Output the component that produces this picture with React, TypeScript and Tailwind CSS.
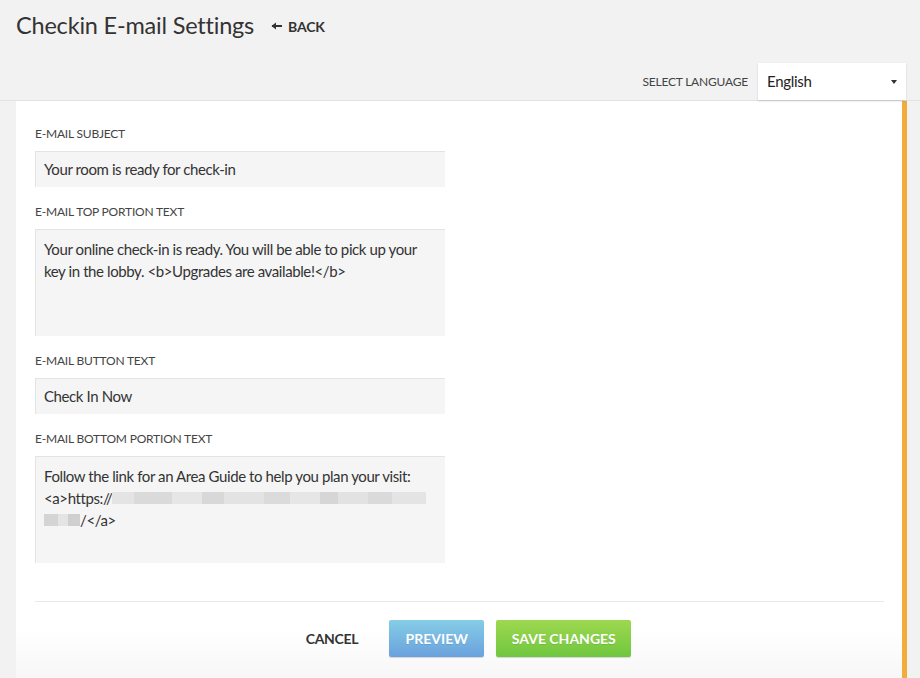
import React from "react";

const font = { fontFamily: "Lato, 'Noto Sans', sans-serif" };

function Label({ children }: { children: React.ReactNode }) {
  return (
    <div className="text-[12px] uppercase text-[#444] tracking-[-0.2px] h-[17px] leading-[17px] mb-[9px]">
      {children}
    </div>
  );
}

function Blur({ w, shade }: { w: number; shade: string }) {
  return <span className={`inline-block h-[12px] align-middle ${shade}`} style={{ width: w }} />;
}

const fieldText = "text-[15px] tracking-[-0.4px] text-[#333]";

export default function App() {
  return (
    <div
      className="w-[920px] h-[678px] overflow-hidden bg-[#f2f2f2] text-[#333] relative"
      style={font}
    >
      {/* header */}
      <div className="flex items-center h-[52px] pl-[16px]">
        <h1 className="text-[23.5px] text-[#333] leading-none tracking-[-0.2px]">Checkin E-mail Settings</h1>
        <div className="flex items-center ml-[17px] gap-[5px] text-[14px] font-bold text-[#333] tracking-[-0.2px]">
          <svg width="12" height="10" viewBox="0 0 12 10">
            <path d="M1 5h10" stroke="#333" strokeWidth="2" />
            <path d="M0.5 5L5 1.5v7z" fill="#333" />
          </svg>
          <span>BACK</span>
        </div>
      </div>
      {/* language bar */}
      <div className="flex justify-end items-start h-[49px] border-b border-[#e2e2e2] pr-[14px] pt-[11px]">
        <div className="flex items-center h-[37px]">
          <span className="text-[12px] tracking-[-0.2px] text-[#444] mr-[10px]">SELECT LANGUAGE</span>
          <div className="w-[148px] h-[37px] bg-white shadow-[0_1px_2px_rgba(0,0,0,0.15)] flex items-center justify-between pl-[9px] pr-[9px] text-[15px] tracking-[-0.3px] text-[#222] relative z-10">
            <span>English</span>
            <svg width="6" height="4" viewBox="0 0 6 4">
              <path d="M0 0h6L3 4z" fill="#333" />
            </svg>
          </div>
        </div>
      </div>
      {/* panel */}
      <div className="ml-[16px] w-[891px] h-[600px] bg-gradient-to-b from-white from-[88%] to-[#f3f3f3] border-r-[5px] border-[#f0ad3c] pl-[19px] pr-[18px] pt-[24px]">
        <Label>E-MAIL SUBJECT</Label>
        <div className={`w-[410px] h-[36px] bg-[#f5f5f5] border-t border-l border-[#e4e4e4] flex items-center pl-[8px] mb-[16px] ${fieldText}`}>
          Your room is ready for check-in
        </div>
        <Label>E-MAIL TOP PORTION TEXT</Label>
        <div className={`w-[410px] h-[107px] bg-[#f5f5f5] border-t border-l border-[#e4e4e4] pl-[8px] pr-[10px] pt-[8px] leading-[22px] mb-[16px] ${fieldText}`}>
          Your online check-in is ready. You will be able to pick up your key in the lobby. &lt;b&gt;Upgrades are available!&lt;/b&gt;
        </div>
        <Label>E-MAIL BUTTON TEXT</Label>
        <div className={`w-[410px] h-[36px] bg-[#f5f5f5] border-t border-l border-[#e4e4e4] flex items-center pl-[8px] mb-[16px] ${fieldText}`}>
          Check In Now
        </div>
        <Label>E-MAIL BOTTOM PORTION TEXT</Label>
        <div className={`w-[410px] h-[107px] bg-[#f5f5f5] border-t border-l border-[#e4e4e4] pl-[8px] pr-[10px] pt-[8px] leading-[22px] ${fieldText}`}>
          <div>Follow the link for an Area Guide to help you plan your visit:</div>
          <div className="flex items-center">
            <span>&lt;a&gt;https://</span>
            <span className="inline-flex items-center h-[12px]">
              <Blur w={22} shade="bg-[#e4e4e4]" />
              <Blur w={38} shade="bg-[#dadada]" />
              <Blur w={30} shade="bg-[#e6e6e6]" />
              <Blur w={22} shade="bg-[#d8d8d8]" />
              <Blur w={40} shade="bg-[#e3e3e3]" />
              <Blur w={26} shade="bg-[#dbdbdb]" />
              <Blur w={30} shade="bg-[#e6e6e6]" />
              <Blur w={18} shade="bg-[#d6d6d6]" />
              <Blur w={30} shade="bg-[#e2e2e2]" />
              <Blur w={24} shade="bg-[#dadada]" />
              <Blur w={34} shade="bg-[#e4e4e4]" />
            </span>
          </div>
          <div className="flex items-center">
            <span className="inline-flex items-center h-[12px]">
              <Blur w={14} shade="bg-[#d4d4d4]" />
              <Blur w={10} shade="bg-[#e4e4e4]" />
              <Blur w={12} shade="bg-[#cfcfcf]" />
            </span>
            <span>/&lt;/a&gt;</span>
          </div>
        </div>
        <div className="h-px bg-[#e8e8e8] mt-[38px]" />
        <div className="flex items-center justify-center gap-[12px] mt-[18px] pl-[18px]">
          <button className="text-[14px] font-bold text-[#333] tracking-[-0.3px] mr-[19px]">CANCEL</button>
          <button className="w-[95px] h-[37px] rounded-[2px] bg-gradient-to-b from-[#85cde6] to-[#6aa1dd] text-white text-[14px] font-bold shadow-[0_1px_1px_rgba(0,0,0,0.15)] [text-shadow:0_1px_0_rgba(0,0,0,0.1)]">
            PREVIEW
          </button>
          <button className="w-[135px] h-[37px] rounded-[2px] bg-gradient-to-b from-[#9dd84f] to-[#6fc63f] text-white text-[14px] font-bold shadow-[0_1px_1px_rgba(0,0,0,0.15)] [text-shadow:0_1px_0_rgba(0,0,0,0.1)]">
            SAVE CHANGES
          </button>
        </div>
      </div>
    </div>
  );
}
